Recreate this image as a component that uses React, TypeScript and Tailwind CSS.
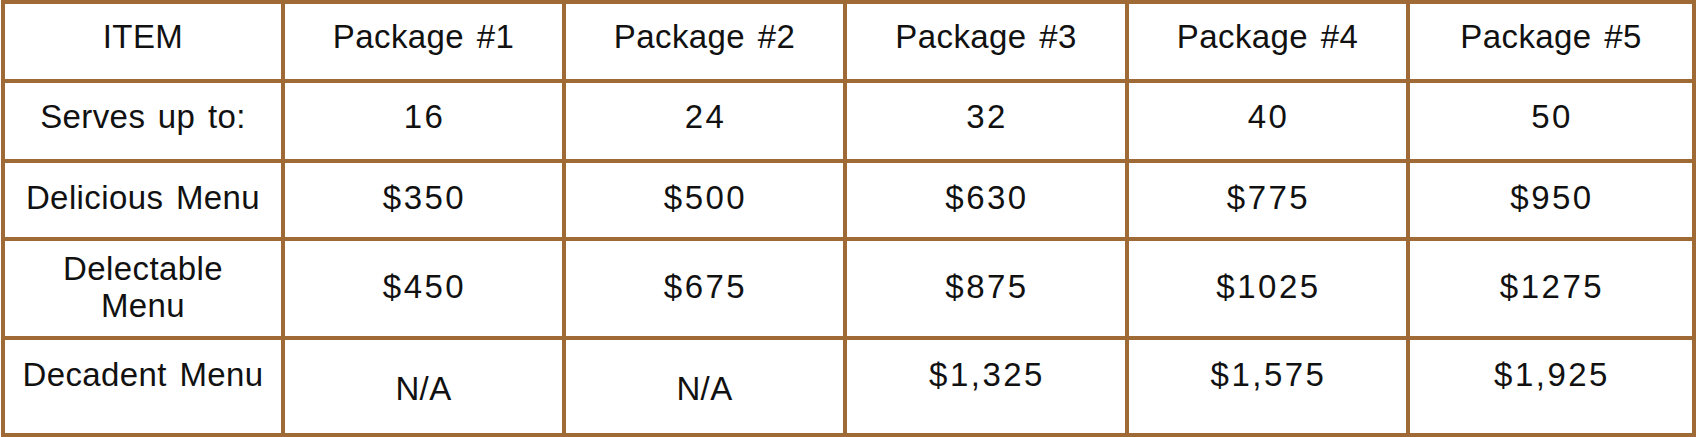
const headers = ["ITEM", "Package #1", "Package #2", "Package #3", "Package #4", "Package #5"];

type Row = {
  cells: string[];
  align: string;
};

const rows: Row[] = [
  { cells: ["Serves up to:", "16", "24", "32", "40", "50"], align: "items-center pb-[10px]" },
  { cells: ["Delicious Menu", "$350", "$500", "$630", "$775", "$950"], align: "items-center pb-[6px]" },
  { cells: ["Delectable Menu", "$450", "$675", "$875", "$1025", "$1275"], align: "items-center pb-[4px]" },
];

const decadent = ["Decadent Menu", "N/A", "N/A", "$1,325", "$1,575", "$1,925"];

const cellBase =
  "flex justify-center bg-white text-center text-[33px] leading-[37px] text-[#111] [word-spacing:3px]";

// numbers in the original face run wider than Arial's
const num = (c: string) => (/^\$?[\d,]+$/.test(c) ? "tracking-[2.5px] pl-[2px]" : "tracking-[0.4px]");

export default function App() {
  return (
    <div className="min-h-screen bg-white" style={{ fontFamily: '"Liberation Sans", Arial, sans-serif' }}>
      <div className="ml-[1px] grid w-[1695px] grid-cols-[276px_277px_277px_278px_277px_282px] grid-rows-[75px_76px_74px_95px_93px] gap-[4px] bg-[#9f6a36] p-[4px]">
        {headers.map((h) => (
          <div key={h} className={`${cellBase} tracking-[0.4px] items-center pb-[10px]`}>
            {h}
          </div>
        ))}

        {rows.map((row) =>
          row.cells.map((c, i) => (
            <div key={row.cells[0] + i} className={`${cellBase} ${num(c)} ${row.align}`}>
              {c === "Delectable Menu" ? (
                <span>
                  Delectable
                  <br />
                  Menu
                </span>
              ) : (
                c
              )}
            </div>
          ))
        )}

        {decadent.map((c, i) => (
          <div
            key={"dec" + i}
            className={`${cellBase} ${num(c)} ${c === "N/A" ? "items-center pt-[4px]" : "items-start pt-[16px]"}`}
          >
            {c}
          </div>
        ))}
      </div>
    </div>
  );
}
